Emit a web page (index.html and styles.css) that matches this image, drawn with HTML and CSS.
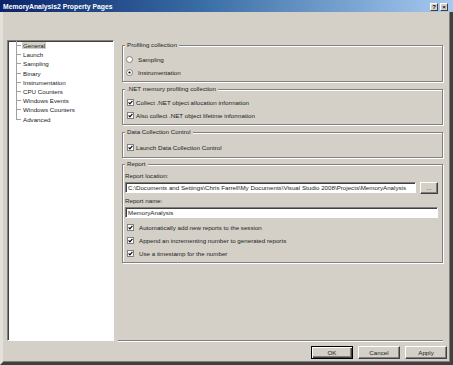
FILE: index.html
```html
<!DOCTYPE html>
<html lang="en">
<head>
    <meta charset="UTF-8">
    <title>MemoryAnalysis2 Property Pages</title>
    <link rel="stylesheet" href="styles.css">
</head>
<body>

    <!-- shared marks for check boxes and radio buttons -->
    <svg class="defs" width="0" height="0">
        <symbol id="check-on" viewBox="0 0 7 7">
            <rect x="0.5" y="0.5" width="6" height="6" fill="#fff" stroke="#808080"/>
            <path d="M1.6 3.3 L2.9 4.8 L5.4 1.8" fill="none" stroke="#000" stroke-width="1.1"/>
        </symbol>
        <symbol id="radio-off" viewBox="0 0 7 7">
            <circle cx="3.5" cy="3.5" r="3" fill="#fff" stroke="#808080"/>
        </symbol>
        <symbol id="radio-on" viewBox="0 0 7 7">
            <circle cx="3.5" cy="3.5" r="3" fill="#fff" stroke="#808080"/>
            <circle cx="3.5" cy="3.5" r="1.1" fill="#000"/>
        </symbol>
    </svg>

    <div class="window">
        <div class="titlebar">
            <span class="title">MemoryAnalysis2 Property Pages</span>
            <span class="caption-buttons">
                <span class="cap-btn">?</span>
                <span class="cap-btn">×</span>
            </span>
        </div>

        <div class="main">
            <!-- page list -->
            <ul class="tree">
                <li class="selected"><span>General</span></li>
                <li><span>Launch</span></li>
                <li><span>Sampling</span></li>
                <li><span>Binary</span></li>
                <li><span>Instrumentation</span></li>
                <li><span>CPU Counters</span></li>
                <li><span>Windows Events</span></li>
                <li><span>Windows Counters</span></li>
                <li><span>Advanced</span></li>
            </ul>

            <!-- General page -->
            <div class="pages">
                <fieldset class="group group-profiling">
                    <legend>Profiling collection</legend>
                    <div class="option wide"><svg class="mark"><use href="#radio-off"/></svg>Sampling</div>
                    <div class="option wide"><svg class="mark"><use href="#radio-on"/></svg>Instrumentation</div>
                </fieldset>

                <fieldset class="group group-net">
                    <legend>.NET memory profiling collection</legend>
                    <div class="option"><svg class="mark"><use href="#check-on"/></svg>Collect .NET object allocation information</div>
                    <div class="option"><svg class="mark"><use href="#check-on"/></svg>Also collect .NET object lifetime information</div>
                </fieldset>

                <fieldset class="group group-control">
                    <legend>Data Collection Control</legend>
                    <div class="option"><svg class="mark"><use href="#check-on"/></svg>Launch Data Collection Control</div>
                </fieldset>

                <fieldset class="group group-report">
                    <legend>Report</legend>
                    <div class="field-label">Report location:</div>
                    <div class="path-row">
                        <input class="textbox" type="text" value="C:\Documents and Settings\Chris Farrell\My Documents\Visual Studio 2008\Projects\MemoryAnalysis">
                        <button class="btn browse">...</button>
                    </div>
                    <div class="field-label">Report name:</div>
                    <input class="textbox full" type="text" value="MemoryAnalysis">
                    <div class="report-options">
                        <div class="option wide"><svg class="mark"><use href="#check-on"/></svg>Automatically add new reports to the session</div>
                        <div class="option wide"><svg class="mark"><use href="#check-on"/></svg>Append an incrementing number to generated reports</div>
                        <div class="option wide"><svg class="mark"><use href="#check-on"/></svg>Use a timestamp for the number</div>
                    </div>
                </fieldset>
            </div>
        </div>

        <div class="footer">
            <button class="btn default">OK</button>
            <button class="btn">Cancel</button>
            <button class="btn">Apply</button>
        </div>
    </div>

</body>
</html>
```

FILE: styles.css
```css
* {
    box-sizing: border-box;
}
body {
    margin: 0;
    font-family: "Liberation Sans", Arial, sans-serif;
    font-size: 6.2px;
    color: #000;
    background-color: #d4d0c8;
}
.defs {
    position: absolute;
}
.window {
    width: 453px;
    height: 365px;
    display: flex;
    flex-direction: column;
    background-color: #d4d0c8;
    border: 3px solid;
    border-top: 0;
    border-color: #d4d0c8 #404040 #404040 #e4e1db;
    box-shadow: inset -1px -1px #808080;
}

/* title bar */
.titlebar {
    height: 12px;
    display: flex;
    align-items: center;
    justify-content: space-between;
    margin: 0 -3px;
    padding: 0 5px 0 3px;
    background: linear-gradient(to right, #0a246a, #3a6ea5 45%, #a6caf0);
    color: #fff;
    font-weight: bold;
    font-size: 6.8px;
}
.caption-buttons {
    display: flex;
    gap: 2px;
    margin-top: 2px;
}
.cap-btn {
    width: 8px;
    height: 8px;
    background-color: #d4d0c8;
    border: 1px solid;
    border-color: #fff #404040 #404040 #fff;
    color: #000;
    font-size: 6px;
    line-height: 6px;
    text-align: center;
}

/* body */
.main {
    flex: 1;
    display: flex;
    padding: 28px 7px 0 4px;
}
.tree {
    width: 107px;
    margin: 0;
    padding: 0;
    list-style: none;
    background-color: #fff;
    border: 1px solid;
    border-color: #808080 #fff #fff #808080;
    box-shadow: inset 1px 1px #404040;
}
.tree li {
    height: 9.2px;
    line-height: 9.2px;
    padding-left: 14px;
    color: #222;
    background-image: linear-gradient(#a0a0a0, #a0a0a0), linear-gradient(#a0a0a0, #a0a0a0);
    background-repeat: no-repeat;
    background-position: 8px 0, 8px 50%;
    background-size: 1px 100%, 5px 1px;
}
.tree li:last-child {
    background-size: 1px 50%, 5px 1px;
}
.tree li span {
    padding: 0 1px;
}
.tree li.selected span {
    background-color: #d4d0c8;
}
.pages {
    flex: 1;
    display: flex;
    flex-direction: column;
    margin-left: 4px;
    padding: 1px 0 0 4px;
    border-bottom: 1px solid #808080;
    box-shadow: 0 1px #fff;
}

/* group boxes */
.group {
    margin: 0 0 3px;
    padding: 4px 4px 2px 2px;
    min-width: 0;
    border: 1px solid #808080;
    box-shadow: inset 1px 1px #fff, 1px 1px #fff;
}
.group legend {
    padding: 0 2px;
    line-height: 8px;
    background-color: #d4d0c8;
    color: #222;
}
.group-net {
    padding-top: 3px;
}
.group-control {
    padding-top: 5px;
    padding-bottom: 3px;
    margin-bottom: 2px;
}
.option {
    height: 13px;
    display: flex;
    align-items: center;
    gap: 2px;
    padding-left: 2px;
    color: #222;
}
.option.wide {
    gap: 5px;
}
.group-profiling .option {
    padding-left: 1px;
}
.mark {
    width: 7px;
    height: 7px;
    flex: none;
}
.field-label {
    line-height: 8px;
    margin-bottom: 2px;
    color: #222;
}
.path-row {
    display: flex;
    gap: 4px;
    margin-bottom: 3px;
}
.textbox {
    flex: 1;
    min-width: 0;
    height: 11px;
    margin: 0;
    padding: 0 2px;
    font: inherit;
    color: #222;
    background-color: #fff;
    border: 1px solid;
    border-color: #808080 #fff #fff #808080;
    box-shadow: inset 1px 1px #404040;
    outline: none;
}
.textbox.full {
    display: block;
    width: 100%;
}
.report-options {
    margin-top: 3px;
}

/* buttons */
.btn {
    width: 42px;
    height: 13px;
    padding: 0;
    font: inherit;
    color: #222;
    background-color: #d4d0c8;
    border: 1px solid;
    border-color: #fff #404040 #404040 #fff;
    box-shadow: inset -1px -1px #808080;
}
.btn.default {
    border-color: #000;
    box-shadow: inset 1px 1px #fff, inset -1px -1px #404040, inset -2px -2px #808080;
}
.btn.browse {
    width: 18px;
    height: 12px;
    line-height: 8px;
}
.footer {
    display: flex;
    justify-content: flex-end;
    gap: 5px;
    padding: 5px 3px 3px 0;
}
```
